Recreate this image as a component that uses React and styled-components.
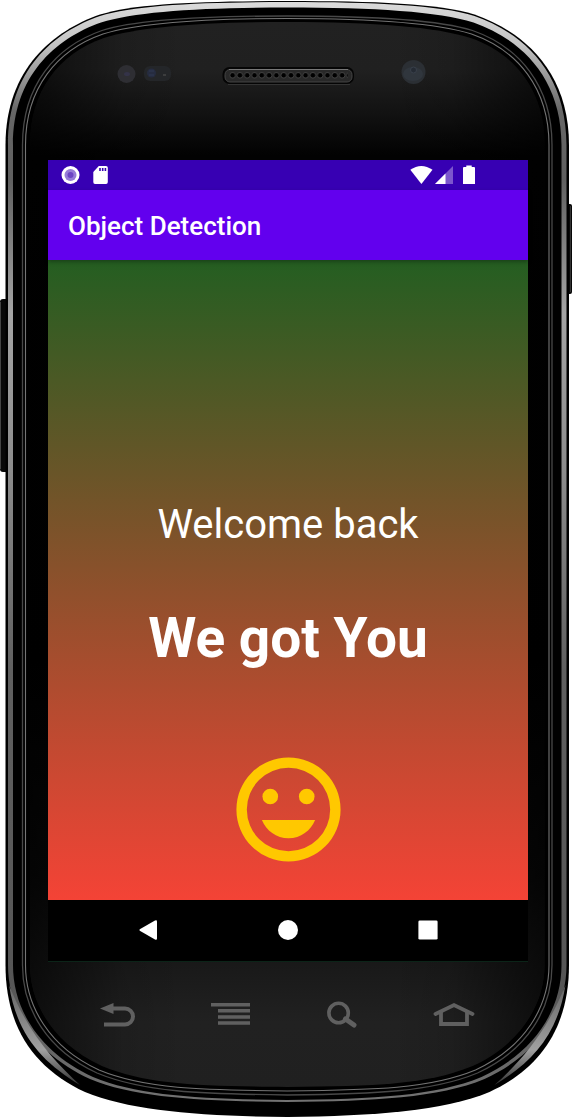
import React from 'react';
import styled, { createGlobalStyle } from 'styled-components';

const GlobalStyle = createGlobalStyle`
  * { box-sizing: border-box; }
  body {
    margin: 0;
    background: #fff;
    font-family: Roboto, "Liberation Sans", sans-serif;
  }
`;

const Phone = styled.main`
  position: relative;
  display: flex;
  flex-direction: column;
  width: 100%;
  padding: 0 44px 60px 48px;
`;

const ShellArt = styled.svg`
  position: absolute;
  inset: 0;
  z-index: -1;
  width: 100%;
  height: 100%;
`;

const Bezel = styled.header`
  height: 160px;
`;

const Screen = styled.section`
  display: flex;
  flex-direction: column;
`;

const StatusBar = styled.div`
  display: flex;
  align-items: center;
  justify-content: space-between;
  height: 30px;
  padding: 0 52px 0 12px;
  background: #3700b3;
`;

const StatusGroup = styled.div`
  display: flex;
  align-items: center;
  gap: ${({ $gap }) => $gap}px;
`;

const AppBar = styled.div`
  position: relative;
  display: flex;
  align-items: center;
  height: 70px;
  padding: 2px 20px 0;
  background: #6200ee;
  box-shadow: 0 2px 4px rgba(0, 0, 0, 0.3);
`;

const Title = styled.h1`
  margin: 0;
  color: #fff;
  font-size: 26px;
  font-weight: 500;
  line-height: 30px;
`;

const Content = styled.div`
  display: flex;
  flex-direction: column;
  align-items: center;
  min-height: 640px;
  padding-top: 241px;
  background: linear-gradient(#245e21, #f44336);
  color: #fff;
  text-align: center;
`;

const Greeting = styled.p`
  margin: 0;
  font-size: 40px;
  line-height: 48px;
`;

const Headline = styled.h2`
  margin: 56px 0 76px;
  font-size: 55px;
  font-weight: 700;
  line-height: 66px;
`;

const SoftKeys = styled.nav`
  display: grid;
  grid-template-columns: repeat(3, 1fr);
  height: 62px;
  padding: 0 30px 1px;
  background: #000;
  border-bottom: 1px solid #0b2418;
`;

const HardKeys = styled.nav`
  display: grid;
  grid-template-columns: repeat(4, 1fr);
  height: 84px;
  margin-top: 12px;
  padding: 0 18px 2px 14px;
`;

const Key = styled.button`
  display: flex;
  align-items: center;
  justify-content: center;
  padding: 0;
  border: 0;
  background: none;
  color: ${({ $color }) => $color};
  cursor: pointer;
`;

/* Closed outline of the handset: side inset, top and bottom edges, and the corner knots. */
function outline(x, top, topX, topY, botX, botY, bottom) {
  const m = (v) => 574.5 - v;
  const c = 287.25;
  return [
    `M${c} ${top}`,
    `C200 ${top} ${topX + 35} ${topY - 11} ${topX} ${topY}`,
    `C${topX - 46} ${topY + 16} ${x} ${topY + 54} ${x} 145`,
    `V965`,
    `C${x} ${botY - 64} ${botX - 50} ${botY - 23} ${botX} ${botY}`,
    `C${botX + 46} ${botY + 19} 200 ${bottom - 1} ${c} ${bottom}`,
    `C${m(200)} ${bottom - 1} ${m(botX + 46)} ${botY + 19} ${m(botX)} ${botY}`,
    `C${m(botX - 50)} ${botY - 23} ${m(x)} ${botY - 64} ${m(x)} 965`,
    `V145`,
    `C${m(x)} ${topY + 54} ${m(topX - 46)} ${topY + 16} ${m(topX)} ${topY}`,
    `C${m(topX + 35)} ${topY - 11} ${m(200)} ${top} ${c} ${top}Z`,
  ].join(' ');
}

const BODY = outline(5.5, 1, 100, 14.5, 85, 1092, 1117);
const RIM_OUTER = outline(8, 2, 100, 16, 90, 1079, 1102);
const RIM_INNER = outline(13, 7.5, 101, 22.5, 93, 1077, 1100);
const LINE_OUTER = outline(22.5, 16, 102, 30.5, 97, 1073, 1095);
const LINE_INNER = outline(25.5, 18.5, 103, 34, 99, 1070, 1091);
const FACE = outline(30, 22, 104, 38, 102, 1066, 1087);

function Shell() {
  return (
    <ShellArt viewBox="0 0 572 1118" preserveAspectRatio="none" aria-hidden="true">
      <defs>
        <linearGradient id="rim" gradientUnits="userSpaceOnUse" x1="0" y1="0" x2="0" y2="1118">
          <stop offset="0" stopColor="#dcdcdc" />
          <stop offset="0.04" stopColor="#c4c4c4" />
          <stop offset="0.1" stopColor="#666" />
          <stop offset="0.16" stopColor="#606060" />
          <stop offset="0.28" stopColor="#a4a4a4" />
          <stop offset="0.42" stopColor="#8c8c8c" />
          <stop offset="0.6" stopColor="#606060" />
          <stop offset="0.88" stopColor="#555" />
          <stop offset="1" stopColor="#777" />
        </linearGradient>
        <linearGradient id="face" x1="0" y1="0" x2="0" y2="1">
          <stop offset="0" stopColor="#212121" />
          <stop offset="0.045" stopColor="#202020" />
          <stop offset="0.085" stopColor="#121212" />
          <stop offset="0.125" stopColor="#020202" />
          <stop offset="0.6" stopColor="#000" />
          <stop offset="0.8" stopColor="#0a0a0a" />
          <stop offset="0.885" stopColor="#191919" />
          <stop offset="0.94" stopColor="#212121" />
          <stop offset="1" stopColor="#202020" />
        </linearGradient>
        <linearGradient id="edge" x1="0" y1="0" x2="1" y2="0">
          <stop offset="0" stopColor="#000" stopOpacity="0.6" />
          <stop offset="0.18" stopColor="#000" stopOpacity="0.1" />
          <stop offset="0.3" stopColor="#000" stopOpacity="0" />
          <stop offset="0.7" stopColor="#000" stopOpacity="0" />
          <stop offset="0.82" stopColor="#000" stopOpacity="0.1" />
          <stop offset="1" stopColor="#000" stopOpacity="0.6" />
        </linearGradient>
        <linearGradient id="glint" x1="0" y1="0" x2="0" y2="1">
          <stop offset="0" stopColor="#666" />
          <stop offset="0.65" stopColor="#a0a0a0" />
          <stop offset="1" stopColor="#333" />
        </linearGradient>
        <pattern id="grille" x="229" y="71" width="7.3" height="9" patternUnits="userSpaceOnUse">
          <circle cx="3.6" cy="4.3" r="2.8" fill="#000" stroke="#4a4a4a" strokeWidth="0.8" />
        </pattern>
      </defs>

      <rect x="0" y="299" width="10" height="173" rx="3" fill="#080808" />
      <path d="M0.5 302V469" stroke="#444" />
      <rect x="564" y="204" width="8" height="90" rx="2" fill="#080808" />
      <path d="M570.5 206V292" stroke="#333" />

      <path d={BODY} fill="#000" />
      <path d={`${RIM_OUTER} ${RIM_INNER}`} fill="url(#rim)" fillRule="evenodd" />
      <path d="M9 985C17 1035 42 1062 80 1085C55 1062 29 1035 9 985Z" fill="url(#glint)" />
      <path d="M565.5 985C557.5 1035 532.5 1062 494.5 1085C519.5 1062 545.5 1035 565.5 985Z" fill="url(#glint)" />
      <path d={LINE_OUTER} fill="none" stroke="#484848" strokeWidth="1.3" />
      <path d={LINE_INNER} fill="#000" stroke="#747474" strokeWidth="1.1" />
      <path d={FACE} fill="url(#face)" />
      <path d={FACE} fill="url(#edge)" />

      <circle cx="126.5" cy="74" r="9" fill="#2e2e33" />
      <ellipse cx="127" cy="74" rx="3" ry="2" fill="#343348" />
      <rect x="144" y="66" width="27" height="15" rx="6" fill="#242629" />
      <circle cx="151.5" cy="73" r="4.5" fill="#262c40" />
      <path d="M149 71H154M149 75H154" stroke="#2e3852" />
      <path d="M163 75H166" stroke="#555" />

      <rect x="222.5" y="67" width="131.5" height="17" rx="7" fill="#050505" />
      <rect x="225" y="69.5" width="127" height="12.5" rx="5" fill="#282828" stroke="#444" />
      <path d="M229 69.5H348" stroke="#777" />
      <rect x="229" y="71" width="119" height="9" fill="url(#grille)" />
      <path d="M228 84.5H350" stroke="#333" />

      <circle cx="413.5" cy="72" r="12" fill="#2b2f34" />
      <ellipse cx="413" cy="74" rx="10" ry="7" fill="#30363d" />
      <circle cx="413.5" cy="70" r="3" fill="#252b34" stroke="#39404b" />
    </ShellArt>
  );
}

function StatusIcons() {
  return (
    <StatusBar>
      <StatusGroup $gap={13}>
        <svg width="20" height="20" viewBox="0 0 20 20" role="img" aria-label="Recording">
          <circle cx="10.5" cy="10" r="9" fill="#fff" />
          <circle cx="10.5" cy="10" r="6" fill="#967cd8" />
          <circle cx="10.5" cy="10" r="3" fill="#6c45c4" />
        </svg>
        <svg width="16" height="20" viewBox="0 0 16 20" role="img" aria-label="SD card">
          <path d="M5.8 1H13Q14.8 1 14.8 2.8V17Q14.8 19 13 19H2Q.3 19 .3 17V7Z" fill="#fff" />
          <path d="M7 3V6M9.7 3V6M12.4 3V6" stroke="#3700b3" strokeWidth="1.6" />
        </svg>
      </StatusGroup>
      <StatusGroup $gap={2}>
        <svg width="23" height="20" viewBox="0 0 23 20" role="img" aria-label="Wi-Fi">
          <path d="M.3 4.8Q11.3-2.8 22.5 4.8L11.4 19Z" fill="#fff" />
        </svg>
        <svg width="18" height="20" viewBox="0 0 18 20" role="img" aria-label="Signal">
          <path d="M0 19L18 1V19Z" fill="#7c56cd" />
          <path d="M0 19L10.5 8.5V19Z" fill="#fff" />
        </svg>
        <svg width="21" height="20" viewBox="-8 0 21 20" role="img" aria-label="Battery">
          <path d="M0 3Q0 2 1 2H3.3V.5H8.7V2H11Q12 2 12 3V19H0Z" fill="#fff" />
        </svg>
      </StatusGroup>
    </StatusBar>
  );
}

function Smile() {
  return (
    <svg width="125" height="125" viewBox="0 0 24 24" fill="#ffc800" role="img" aria-label="Smiling face">
      <path
        fillRule="evenodd"
        d="M12 2a10 10 0 1 0 0 20a10 10 0 0 0 0-20ZM12 4a8 8 0 1 1 0 16a8 8 0 0 1 0-16Z"
      />
      <circle cx="8.5" cy="9.5" r="1.5" />
      <circle cx="15.5" cy="9.5" r="1.5" />
      <path d="M12 17.5c2.33 0 4.31-1.46 5.11-3.5H6.89c.8 2.04 2.78 3.5 5.11 3.5z" />
    </svg>
  );
}

const softKeys = [
  ['Back', <path d="M2.2 9L17 .6Q19 -.3 19 1.6V18.4Q19 20.3 17 19.4L2.2 11Q.6 10 2.2 9Z" />],
  ['Home', <circle cx="10" cy="10" r="10" />],
  ['Recent apps', <rect x=".4" y=".4" width="19.2" height="19.2" rx="1.4" />],
];

const hardKeys = [
  ['Back', (
    <>
      <path d="M3 8.5L16.5 3V14Z" fill="currentColor" stroke="none" />
      <path d="M15 8.5H28A8 8 0 0 1 28 24.5H7" strokeWidth="4" />
    </>
  )],
  ['Menu', <path d="M2 4.7H41M9 10.7H41M9 17H41M9 23H41" strokeWidth="3.4" />],
  ['Search', (
    <>
      <circle cx="17.6" cy="13" r="9.7" strokeWidth="3.6" />
      <path d="M24.5 19L33 25" strokeWidth="5" strokeLinecap="round" />
    </>
  )],
  ['Home', (
    <>
      <path d="M2.5 14L21 5L39.5 14" strokeWidth="3.8" strokeLinecap="round" />
      <path d="M8 12V24H34V12" strokeWidth="3.8" />
    </>
  )],
];

export default function App() {
  return (
    <>
      <GlobalStyle />
      <Phone>
        <Shell />
        <Bezel />
        <Screen>
          <StatusIcons />
          <AppBar>
            <Title>Object Detection</Title>
          </AppBar>
          <Content>
            <Greeting>Welcome back</Greeting>
            <Headline>We got You</Headline>
            <Smile />
          </Content>
          <SoftKeys aria-label="Navigation">
            {softKeys.map(([label, shape]) => (
              <Key key={label} type="button" aria-label={label} $color="#fff">
                <svg width="20" height="20" viewBox="0 0 20 20" fill="currentColor">{shape}</svg>
              </Key>
            ))}
          </SoftKeys>
        </Screen>
        <HardKeys aria-label="Device keys">
          {hardKeys.map(([label, shape]) => (
            <Key key={label} type="button" aria-label={label} $color="#606060">
              <svg width="42" height="30" viewBox="0 0 42 30" fill="none" stroke="currentColor">{shape}</svg>
            </Key>
          ))}
        </HardKeys>
      </Phone>
    </>
  );
}
